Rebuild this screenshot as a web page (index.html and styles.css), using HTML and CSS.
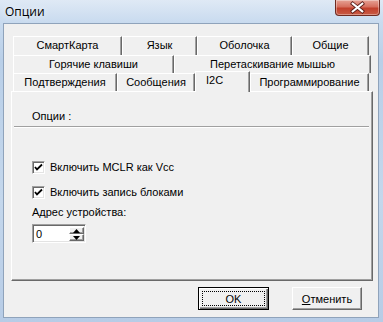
FILE: index.html
```html
<!DOCTYPE html>
<html>
<head>
<meta charset="utf-8">
<link rel="stylesheet" href="styles.css">
</head>
<body>
<div class="window">
  <div class="titlebar">
    <span class="title">Опции</span>
    <div class="close">
      <svg width="45" height="15" viewBox="0 0 45 15">
        <path d="M17.5 3.5 L27.5 11.5 M27.5 3.5 L17.5 11.5" stroke="#5a1e18" stroke-width="4" stroke-linecap="square"/>
        <path d="M17.5 3.5 L27.5 11.5 M27.5 3.5 L17.5 11.5" stroke="#ffffff" stroke-width="2.2" stroke-linecap="square"/>
      </svg>
    </div>
  </div>
  <div class="client">
    <div class="tabctl">
      <div class="tabrow r1">
        <div class="tab t-smart">СмартКарта</div>
        <div class="tab t-lang">Язык</div>
        <div class="tab t-shell">Оболочка</div>
        <div class="tab t-gen">Общие</div>
      </div>
      <div class="tabrow r2">
        <div class="tab t-hot">Горячие клавиши</div>
        <div class="tab t-drag">Перетаскивание мышью</div>
      </div>
      <div class="tabrow r3">
        <div class="tab t-conf">Подтверждения</div>
        <div class="tab t-msg">Сообщения</div>
        <div class="tab t-i2c active">I2C</div>
        <div class="tab t-prog">Программирование</div>
      </div>
      <div class="panel">
        <div class="group-label">Опции :</div>
        <div class="separator"></div>
        <div class="options">
          <label class="check first"><span class="box"><svg width="9" height="9" viewBox="0 0 9 9"><path d="M1 4 L3 6.5 L8 1.5" stroke="#000" stroke-width="1.8" fill="none"/></svg></span>Включить MCLR как Vcc</label>
          <label class="check second"><span class="box"><svg width="9" height="9" viewBox="0 0 9 9"><path d="M1 4 L3 6.5 L8 1.5" stroke="#000" stroke-width="1.8" fill="none"/></svg></span>Включить запись блоками</label>
          <div class="field-label">Адрес устройства:</div>
          <div class="spin">
            <span class="spin-value">0</span>
            <span class="spin-btns">
              <span class="spin-btn"><svg width="7" height="4" viewBox="0 0 7 4"><path d="M3.5 0 L7 4 L0 4 Z" fill="#000"/></svg></span>
              <span class="spin-btn"><svg width="7" height="4" viewBox="0 0 7 4"><path d="M0 0 L7 0 L3.5 4 Z" fill="#000"/></svg></span>
            </span>
          </div>
        </div>
      </div>
    </div>
    <div class="buttons">
      <div class="btn default"><span class="focus">OK</span></div>
      <div class="btn"><span><u>О</u>тменить</span></div>
    </div>
  </div>
</div>
</body>
</html>
```
FILE: styles.css
```css
* { box-sizing: border-box; }
html, body { margin: 0; padding: 0; }
body {
  width: 383px;
  height: 322px;
  overflow: hidden;
  font-family: "Liberation Sans", Arial, sans-serif;
  font-size: 11px;
  color: #000;
}
.window {
  width: 383px;
  height: 322px;
  background: linear-gradient(180deg, #dfe9f5 0px, #c9dbef 22px, #b9cfe8 60px, #c4d7ec 200px, #b7cce6 322px);
  padding: 0 4px 0 3px;
  display: flex;
  flex-direction: column;
}
.titlebar {
  height: 23px;
  display: flex;
  align-items: flex-start;
  justify-content: space-between;
  position: relative;
}
.title {
  font-family: "Open Sans", "Liberation Sans", sans-serif;
  font-size: 12px;
  padding: 3px 0 0 2px;
  color: #000;
  text-shadow: 0 0 6px #fff;
}
.close {
  width: 45px;
  height: 16px;
  margin-right: -1px;
  background: linear-gradient(180deg, #e6a295 0%, #d66f5e 45%, #c2402c 55%, #c85b45 100%);
  border: 1px solid #6e2a20;
  border-top: none;
  border-radius: 0 0 4px 4px;
  box-shadow: inset 0 0 0 1px rgba(255,255,255,0.35);
  display: flex;
}
.client {
  flex: 1;
  margin-bottom: 4px;
  background: #f0f0f0;
  border: 1px solid #8fa3bb;
  padding: 12px 5px 0 7px;
  display: flex;
  flex-direction: column;
}
.tabctl {
  width: 362px;
  display: flex;
  flex-direction: column;
}
.tabrow {
  display: flex;
  margin-left: 2px;
}
.r1 { height: 19px; }
.r2 { height: 18px; }
.r3 { height: 18px; position: relative; z-index: 2; }
.tab {
  height: 100%;
  background: #f0f0f0;
  border-left: 1px solid #fff;
  border-top: 1px solid #fff;
  border-right: 1px solid #696969;
  box-shadow: inset -1px 0 0 #a0a0a0;
  text-align: center;
  line-height: 16px;
  white-space: nowrap;
}
.r1 .tab { line-height: 17px; }
.t-smart { width: 109px; }
.t-lang { width: 75px; }
.t-shell { width: 95px; }
.t-gen { width: 77px; }
.t-hot { width: 161px; }
.t-drag { width: 197px; }
.t-conf { width: 104px; }
.t-msg { width: 78px; }
.t-i2c { width: 55px; }
.t-prog { width: 119px; }
.tab.active {
  height: 21px;
  margin-top: -2px;
  text-align: left;
  padding-left: 10px;
  line-height: 17px;
}
.panel {
  height: 190px;
  background: #f0f0f0;
  border-left: 1px solid #fff;
  border-top: 1px solid #fff;
  border-right: 1px solid #696969;
  border-bottom: 1px solid #696969;
  box-shadow: inset -1px -1px 0 #a0a0a0;
  display: flex;
  flex-direction: column;
  position: relative;
  z-index: 1;
}
.group-label {
  margin: 18px 0 0 20px;
  line-height: 13px;
}
.separator {
  margin: 3px 3px 0 2px;
  height: 2px;
  border-top: 1px solid #a0a0a0;
  border-bottom: 1px solid #fff;
}
.options {
  display: flex;
  flex-direction: column;
  align-items: flex-start;
  padding-left: 20px;
}
.check {
  display: flex;
  align-items: center;
  height: 13px;
  line-height: 13px;
}
.check.first { margin-top: 33px; }
.check.second { margin-top: 12px; }
.box {
  width: 13px;
  height: 13px;
  margin-right: 5px;
  background: #fff;
  border-top: 1px solid #a0a0a0;
  border-left: 1px solid #a0a0a0;
  border-right: 1px solid #fff;
  border-bottom: 1px solid #fff;
  box-shadow: inset 1px 1px 0 #696969, inset -1px -1px 0 #e3e3e3;
  display: flex;
  align-items: center;
  justify-content: center;
}
.field-label {
  margin-top: 7px;
  line-height: 13px;
}
.spin {
  margin-top: 5px;
  width: 54px;
  height: 19px;
  background: #fff;
  border-top: 1px solid #a0a0a0;
  border-left: 1px solid #a0a0a0;
  border-right: 1px solid #fff;
  border-bottom: 1px solid #fff;
  box-shadow: inset 1px 1px 0 #696969, inset -1px -1px 0 #e3e3e3;
  display: flex;
  justify-content: space-between;
  padding: 2px 1px 1px 3px;
}
.spin-value { line-height: 14px; }
.spin-btns {
  width: 15px;
  display: flex;
  flex-direction: column;
}
.spin-btn {
  flex: 1;
  background: #f0f0f0;
  border-left: 1px solid #fff;
  border-top: 1px solid #fff;
  border-right: 1px solid #696969;
  border-bottom: 1px solid #696969;
  box-shadow: inset -1px -1px 0 #a0a0a0;
  display: flex;
  align-items: center;
  justify-content: center;
}
.buttons {
  display: flex;
  justify-content: flex-end;
  gap: 23px;
  padding: 6px 11px 0 0;
}
.btn {
  width: 71px;
  height: 23px;
  background: #f0f0f0;
  border-left: 1px solid #fff;
  border-top: 1px solid #fff;
  border-right: 1px solid #696969;
  border-bottom: 1px solid #696969;
  box-shadow: inset -1px -1px 0 #a0a0a0;
  display: flex;
  align-items: center;
  justify-content: center;
  padding: 2px;
}
.btn + .btn { width: 70px; }
.btn span {
  width: 100%;
  height: 100%;
  display: flex;
  align-items: center;
  justify-content: center;
}
.btn.default {
  border: 1px solid #000;
  box-shadow: inset 1px 1px 0 #fff, inset -1px -1px 0 #696969, inset -2px -2px 0 #a0a0a0;
  padding: 3px;
}
.btn .focus {
  border: 1px dotted #000;
}
```
